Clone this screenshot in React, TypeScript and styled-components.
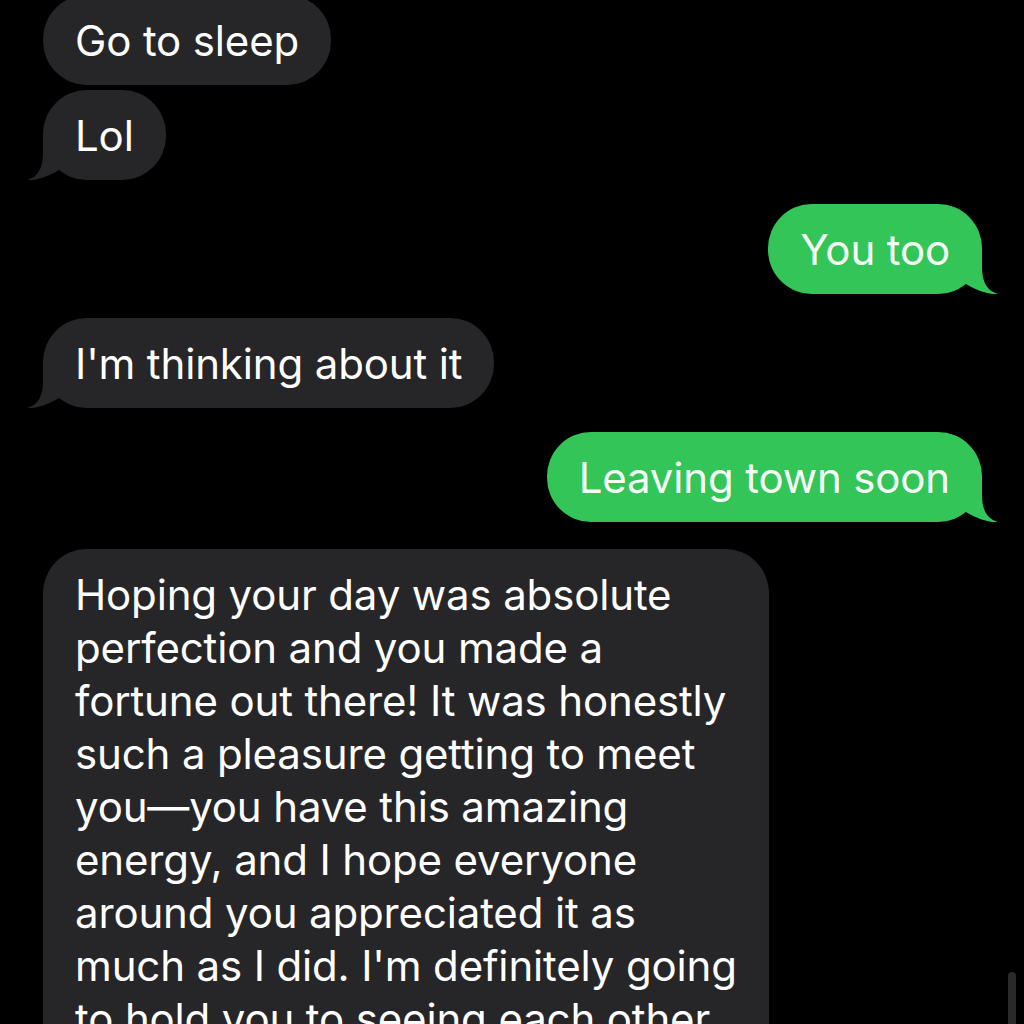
import styled, { createGlobalStyle } from "styled-components";

const GlobalStyle = createGlobalStyle`
    html, body {
        margin: 0;
        padding: 0;
        background: #000;
    }
`;

const Screen = styled.div`
    position: relative;
    width: 1024px;
    height: 1024px;
    overflow: hidden;
    background: #000;
    font-family: Inter, "Noto Sans", "Liberation Sans", sans-serif;
`;

const Thread = styled.div`
    display: flex;
    flex-direction: column;
    margin-top: -5px;
    padding: 0 42px 0 43px;
`;

type Side = "in" | "out";

const Row = styled.div<{ $side: Side; $gap: number }>`
    display: flex;
    justify-content: ${(p) => (p.$side === "out" ? "flex-end" : "flex-start")};
    margin-top: ${(p) => p.$gap}px;
`;

const Bubble = styled.div<{ $side: Side }>`
    position: relative;
    box-sizing: border-box;
    max-width: 740px;
    padding: 19px 32px 18px;
    border-radius: 44px;
    background: ${(p) => (p.$side === "out" ? "#33c557" : "#262628")};
    color: ${(p) => (p.$side === "out" ? "#f6fff6" : "#ffffff")};
    font-size: 42px;
    line-height: 53px;
    letter-spacing: -0.15px;
    white-space: pre-line;
`;

const Tail = styled.svg<{ $side: Side }>`
    position: absolute;
    bottom: 0;
    width: 34px;
    height: 46px;
    overflow: visible;
    ${(p) => (p.$side === "out" ? "right: -16px; transform: scaleX(-1);" : "left: -16px;")}
`;

const ScrollThumb = styled.div`
    position: absolute;
    right: 8px;
    top: 972px;
    width: 8px;
    height: 80px;
    border-radius: 4px;
    background: #2a2a2a;
`;

type Message = { side: Side; text: string; tail: boolean; gap: number };

const messages: Message[] = [
    { side: "in", text: "Go to sleep", tail: false, gap: 0 },
    { side: "in", text: "Lol", tail: true, gap: 5 },
    { side: "out", text: "You too", tail: true, gap: 24 },
    { side: "in", text: "I'm thinking about it", tail: true, gap: 24 },
    { side: "out", text: "Leaving town soon", tail: true, gap: 24 },
    {
        side: "in",
        text:
            "Hoping your day was absolute\nperfection and you made a\nfortune out there! It was honestly\nsuch a pleasure getting to meet\nyou\u2014you have this amazing\nenergy, and I hope everyone\naround you appreciated it as\nmuch as I did. I'm definitely going\nto hold you to seeing each other\nagain soon.",
        tail: true,
        gap: 27,
    },
];

// tail drawn from the bubble's bottom-left corner, mirrored for outgoing
function BubbleTail({ side }: { side: Side }) {
    const fill = side === "out" ? "#33c557" : "#262628";
    return (
        <Tail $side={side} viewBox="-16 -46 34 46">
            <path
                d="M0,-46 L0,-27 C0,-12 -5,-3 -16,0 C-7,0.5 5,-3 16,-10 L16,-46 Z"
                fill={fill}
            />
        </Tail>
    );
}

function App() {
    return (
        <Screen>
            <GlobalStyle />
            <Thread>
                {messages.map((m, i) => (
                    <Row key={i} $side={m.side} $gap={m.gap}>
                        <Bubble $side={m.side}>
                            {m.tail && <BubbleTail side={m.side} />}
                            {m.text}
                        </Bubble>
                    </Row>
                ))}
            </Thread>
            <ScrollThumb />
        </Screen>
    );
}

export default App;
